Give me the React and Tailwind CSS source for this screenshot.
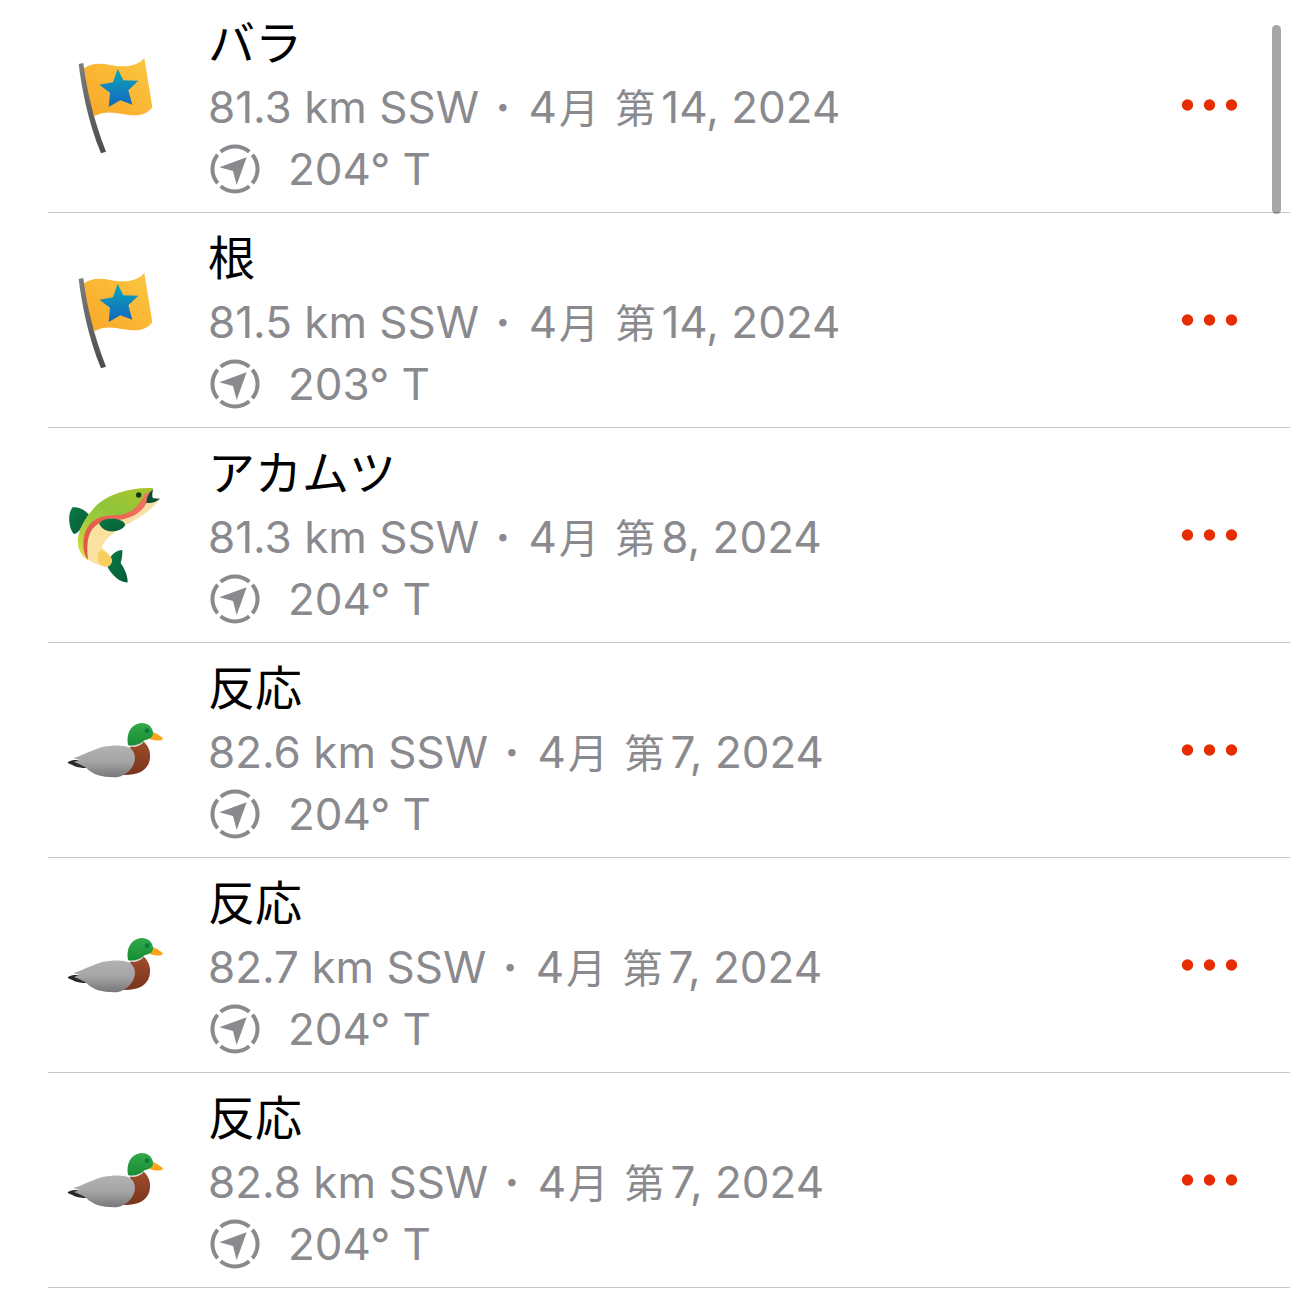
import React from "react";

const FONT =
  "font-['Inter','Noto_Sans_CJK_JP',sans-serif]";

function FlagIcon() {
  return (
    <svg viewBox="0 0 330 360" className="w-[110px] h-[120px]" aria-hidden="true">
      <defs>
        <linearGradient id="flagCloth" x1="0" y1="1" x2="1" y2="0">
          <stop offset="0" stopColor="#f9a727" />
          <stop offset="1" stopColor="#fbc742" />
        </linearGradient>
        <linearGradient id="flagStar" x1="0" y1="0" x2="0" y2="1">
          <stop offset="0" stopColor="#0aa9b8" />
          <stop offset="1" stopColor="#1565c0" />
        </linearGradient>
        <linearGradient id="flagPole" x1="0" y1="0" x2="0" y2="1">
          <stop offset="0" stopColor="#7d7d7d" />
          <stop offset="1" stopColor="#4d4d4d" />
        </linearGradient>
      </defs>
      <path
        d="M70 71 C92 55 118 53 150 60 C190 68 230 66 253 39 L277 187 C262 207 240 214 208 210 C170 205 138 194 104 213 L90 190 Z"
        fill="url(#flagCloth)"
      />
      <path d="M56 57 L70 54 C79 125 97 215 138 320 L123 325 C84 230 65 130 56 57 Z" fill="url(#flagPole)" />
      <path
        d="M173 71 L190 106 L235 107 L205 136 L217 179 L181 166 L146 186 L150 143 L118 119 L159 112 Z"
        fill="url(#flagStar)"
      />
    </svg>
  );
}

function FishIcon() {
  return (
    <svg viewBox="0 0 330 360" className="w-[110px] h-[120px]" aria-hidden="true">
      <defs>
        <linearGradient id="fishBack" x1="0.6" y1="0" x2="0.1" y2="1">
          <stop offset="0" stopColor="#a3c62f" />
          <stop offset="0.3" stopColor="#8fc53a" />
          <stop offset="0.6" stopColor="#a5cc3a" />
          <stop offset="1" stopColor="#e3dc4a" />
        </linearGradient>
        <linearGradient id="fishBelly" x1="1" y1="0" x2="0" y2="1">
          <stop offset="0" stopColor="#f7dcae" />
          <stop offset="0.6" stopColor="#fae19f" />
          <stop offset="1" stopColor="#fbe3a0" />
        </linearGradient>
        <linearGradient id="fishFin" x1="0" y1="0" x2="1" y2="1">
          <stop offset="0" stopColor="#087a42" />
          <stop offset="1" stopColor="#075b39" />
        </linearGradient>
        <linearGradient id="fishStripe" x1="1" y1="0" x2="0" y2="1">
          <stop offset="0" stopColor="#f07860" />
          <stop offset="1" stopColor="#e05345" />
        </linearGradient>
      </defs>
      <path d="M38 97 C57 94 76 106 90 122 L66 155 C58 168 50 176 42 177 C25 160 22 114 38 97 Z" fill="url(#fishFin)" />
      <path d="M143 277 L153 244 C162 232 173 226 187 225 C188 240 185 252 182 264 C194 283 203 299 203 322 C181 324 157 302 143 277 Z" fill="url(#fishFin)" />
      <path
        d="M279 39 L263 82 L300 72 C282 98 252 119 213 142 C172 166 134 187 126 217 C132 228 158 243 156 259 C152 272 144 277 133 275 C82 263 50 229 54 190 C59 157 80 121 113 88 C155 51 225 36 279 39 Z"
        fill="url(#fishBelly)"
      />
      <path
        d="M279 39 L259 79 C245 106 221 119 186 125 C138 127 102 139 88 166 C75 190 74 216 83 255 C61 239 50 215 54 188 C59 157 80 121 113 88 C155 51 225 36 279 39 Z"
        fill="url(#fishBack)"
      />
      <path
        d="M274 47 L260 84 C243 115 213 130 180 134 C136 135 106 143 93 169 C81 190 80 220 84 255 C68 235 66 199 76 171 C91 133 124 120 165 121 C215 119 238 92 253 58 Z"
        fill="url(#fishStripe)"
      />
      <path d="M120 225 C135 224 151 241 156 259 C152 273 144 278 131 274 C113 267 107 245 120 225 Z" fill="#f8ce60" />
      <path d="M118 147 C124 132 147 130 169 132 C186 136 195 142 195 151 C188 165 167 171 148 169 C132 165 123 158 118 147 Z" fill="url(#fishFin)" />
      <path d="M280 42 C266 53 260 68 259 83 C272 86 288 81 300 71 L279 70 C275 62 277 52 280 42 Z" fill="#064f36" />
      <circle cx="236" cy="60" r="8" fill="#12351a" />
    </svg>
  );
}

function DuckIcon() {
  return (
    <svg viewBox="0 0 330 240" className="w-[110px] h-[80px]" aria-hidden="true">
      <defs>
        <linearGradient id="duckBody" x1="0" y1="0" x2="0" y2="1">
          <stop offset="0" stopColor="#b2b2b2" />
          <stop offset="0.5" stopColor="#a5a5a5" />
          <stop offset="1" stopColor="#777777" />
        </linearGradient>
        <linearGradient id="duckHead" x1="0" y1="0" x2="0" y2="1">
          <stop offset="0" stopColor="#35a84b" />
          <stop offset="1" stopColor="#168c34" />
        </linearGradient>
        <linearGradient id="duckBreast" x1="0" y1="0" x2="0" y2="1">
          <stop offset="0" stopColor="#a04d2b" />
          <stop offset="1" stopColor="#79331d" />
        </linearGradient>
      </defs>
      <path d="M23 157 C31 150 44 149 60 150 L90 174 C66 175 46 171 36 164 C29 163 25 161 23 157 Z" fill="#292929" />
      <path d="M212 108 L249 94 C269 109 276 137 265 163 C253 187 224 197 187 195 Z" fill="url(#duckBreast)" />
      <path
        d="M40 144 C88 129 113 108 156 107 C184 106 206 108 216 119 C227 132 227 149 220 164 C210 186 188 202 161 202 C126 201 99 195 79 174 C70 168 58 162 42 156 L58 149 Z"
        fill="url(#duckBody)"
      />
      <path d="M205 102 C220 107 237 102 249 91 L249 99 C236 110 221 113 207 109 Z" fill="#d9d9d9" />
      <path d="M272 63 C289 70 301 77 309 85 C308 94 291 93 270 88 Z" fill="#fba51e" />
      <path
        d="M204 105 C198 73 211 43 242 39 C264 38 280 52 279 72 C277 86 264 88 253 91 C242 103 222 110 204 105 Z"
        fill="url(#duckHead)"
      />
      <circle cx="261" cy="62" r="7" fill="#087b39" />
    </svg>
  );
}

function BearingIcon() {
  return (
    <svg viewBox="32 25 150 150" className="w-[50px] h-[50px] shrink-0" aria-hidden="true">
      <g fill="none" stroke="currentColor" strokeWidth="12">
        <path d="M64 48 A67 67 0 0 1 150 48" />
        <path d="M159 57 A67 67 0 0 1 159 143" />
        <path d="M150 152 A67 67 0 0 1 64 152" />
        <path d="M55 143 A67 67 0 0 1 55 57" />
      </g>
      <path d="M142 65 L60 95 L101 106 L112 148 Z" fill="currentColor" />
    </svg>
  );
}

const ICONS = { flag: FlagIcon, fish: FishIcon, duck: DuckIcon };

const WAYPOINTS = [
  { icon: "flag", name: "バラ", distance: "81.3 km SSW", day: "14", bearing: "204° T" },
  { icon: "flag", name: "根", distance: "81.5 km SSW", day: "14", bearing: "203° T" },
  { icon: "fish", name: "アカムツ", distance: "81.3 km SSW", day: "8", bearing: "204° T" },
  { icon: "duck", name: "反応", distance: "82.6 km SSW", day: "7", bearing: "204° T" },
  { icon: "duck", name: "反応", distance: "82.7 km SSW", day: "7", bearing: "204° T" },
  { icon: "duck", name: "反応", distance: "82.8 km SSW", day: "7", bearing: "204° T" },
];

function WaypointRow({ icon, name, distance, day, bearing }) {
  const Icon = ICONS[icon];
  return (
    <li className="flex items-center border-b border-[#c6c6c8] pl-3 pr-[46px]">
      <Icon />
      <div className="ml-[38px] min-w-0 flex-1 pt-3.5 pb-3 text-[44px] leading-[62px] text-[#8a8a8e]">
        <h2 className="mb-0.5 text-[47px] text-black">{name}</h2>
        <p className="whitespace-nowrap">
          {distance} <span className="ml-1 mr-1.5 font-bold">·</span> 4
          <span className="mx-0.5 text-[40px] leading-none">月</span>{" "}
          <span className="ml-0.5 mr-1.5 text-[40px] leading-none">第</span>
          {day}, 2024
        </p>
        <p className="flex items-center gap-7 pl-0.5">
          <BearingIcon />
          <span>{bearing}</span>
        </p>
      </div>
      <button type="button" aria-label={`${name} メニュー`} className="py-6 text-[#e62c00]">
        <svg viewBox="0 0 70 12" className="h-3 w-[70px]" fill="currentColor" aria-hidden="true">
          <circle cx="13.5" cy="6" r="5.7" />
          <circle cx="35.5" cy="6" r="5.7" />
          <circle cx="57.5" cy="6" r="5.7" />
        </svg>
      </button>
    </li>
  );
}

export default function App() {
  return (
    <main className={`relative overflow-hidden bg-white ${FONT}`} lang="ja">
      <ul className="-mt-0.5 pl-12">
        {WAYPOINTS.map((w, i) => (
          <WaypointRow key={i} {...w} />
        ))}
      </ul>
      <div className="absolute right-[9px] top-[25px] h-[189px] w-[9px] rounded-full bg-black/35" />
    </main>
  );
}
